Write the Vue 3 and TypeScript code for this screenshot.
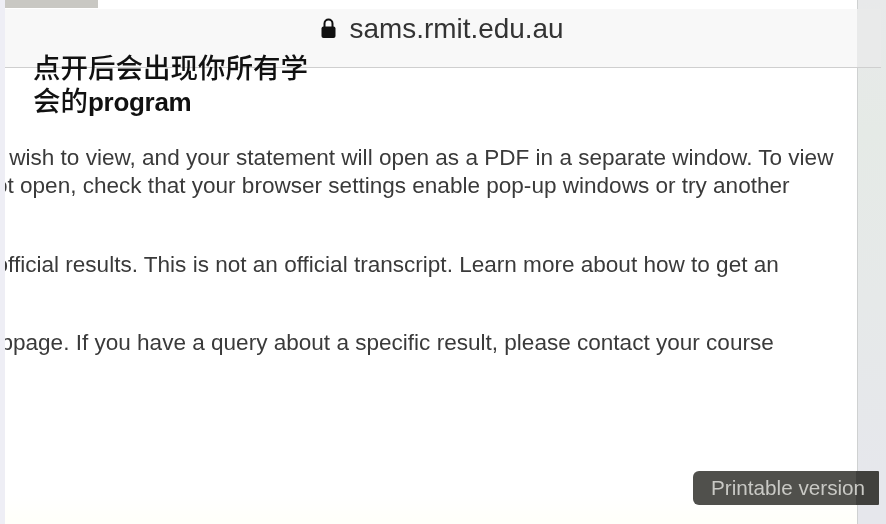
<script setup lang="ts">
const url = 'sams.rmit.edu.au'
</script>

<template>
  <div class="screen">
    <div class="edge"></div>
    <main class="page">
      <div class="tab"></div>
      <header class="bar">
        <svg class="lock" viewBox="0 0 15 20" width="15" height="20" aria-hidden="true">
          <path d="M3.5 10V5.5a4 4 0 0 1 8 0V10" fill="none" stroke="#111" stroke-width="2" />
          <rect x="0.5" y="8.5" width="14" height="11.5" rx="2" fill="#111" />
        </svg>
        <span class="url">{{ url }}</span>
      </header>
      <section class="content">
        <p class="para first">
          <span class="line l1">you wish to view, and your statement will open as a PDF in a separate window. To view</span>
          <span class="line l2">not open, check that your browser settings enable pop-up windows or try another</span>
        </p>
        <p class="para">
          <span class="line l3">official results. This is not an official transcript. Learn more about how to get an</span>
        </p>
        <p class="para">
          <span class="line l4">webpage. If you have a query about a specific result, please contact your course</span>
        </p>
      </section>
      <div class="note">点开后会出现你所有学<br />会的<b class="latin">program</b></div>
    </main>
    <aside class="side"></aside>
    <button class="print" type="button">Printable version</button>
  </div>
</template>

<style>
html, body { margin: 0; background: #fff; }
</style>

<style scoped>
.screen {
  position: relative;
  display: flex;
  width: 886px;
  height: 524px;
  overflow: hidden;
  font-family: "Liberation Sans", Arial, sans-serif;
  background: #fff;
  filter: blur(0.35px);
}
.edge { width: 5px; flex: none; background: #eeeef5; }
.page {
  position: relative;
  flex: 1;
  min-width: 0;
  display: flex;
  flex-direction: column;
  background: linear-gradient(#fff 495px, #fffffa 520px);
}
.tab { width: 93px; height: 8px; flex: none; background: #c9c8c3; }
.bar {
  position: relative;
  z-index: 1;
  flex: none;
  height: 59px;
  margin-top: 1px;
  margin-right: -24px;
  box-sizing: border-box;
  padding: 0 2px 20px 0;
  display: flex;
  align-items: center;
  justify-content: center;
  gap: 14px;
  background: linear-gradient(90deg, #f8f8f8 calc(100% - 24px), #e9eaea 0);
  border-bottom: 1px solid #cfcfcf;
}
.lock { flex: none; }
.url { font-size: 27.9px; color: #333; margin-top: 2px; }
.content { overflow: hidden; padding-top: 76px; color: #3a3a3a; font-size: 22.55px; line-height: 28px; }
.para { margin: 0 0 50px; }
.para.first { margin-bottom: 51px; }
.line { display: block; white-space: nowrap; }
.l1 { margin-left: -38.4px; }
.l2 { margin-left: -22.6px; }
.l3 { margin-left: -9.5px; }
.l4 { margin-left: -33.4px; }
.note {
  position: absolute;
  left: 28px;
  top: 52px;
  z-index: 2;
  font-family: "Liberation Sans", "Noto Sans CJK SC", sans-serif;
  font-size: 27.5px;
  line-height: 33px;
  font-weight: 500;
  color: #111;
}
.latin { font-size: 26px; font-weight: 700; letter-spacing: -0.3px; }
.side {
  width: 29px;
  flex: none;
  background: linear-gradient(#e8e9ea, #e5eae6 130px, #e6e9e9 300px, #e6e7ec 480px);
  border-left: 1px solid #cfd1d1;
  box-sizing: border-box;
}
.print {
  position: absolute;
  left: 693px;
  top: 471px;
  width: 186px;
  height: 34px;
  padding: 0 0 0 18px;
  border: 0;
  border-radius: 6px 1px 1px 6px;
  background: linear-gradient(90deg, #50504c 163px, #40403d 163px);
  color: #c9c9c5;
  font: 20.7px "Liberation Sans", Arial, sans-serif;
  text-align: left;
}
</style>
